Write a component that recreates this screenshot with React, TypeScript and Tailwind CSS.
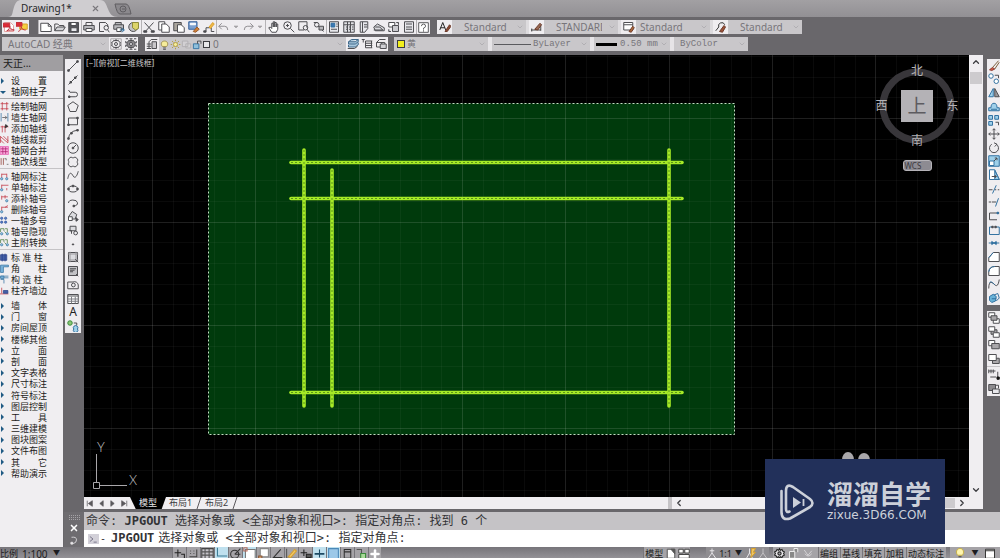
import { ReactNode } from "react";
import {
  ChevronDown,
  ChevronLeft,
  ChevronRight,
  ChevronUp,
  Plus,
  X,
} from "lucide-react";

type Part = [d: string, stroke: string, fill?: string];
type Icon = { name: string; parts: Part[]; size?: string };

const INK = "#4b4b4f";
const BLUE = "#2f6f9f";
const SKY = "#9fd0ea";
const RED = "#c0303c";
const GOLD = "#d9a02a";

// Every icon is drawn on a 16x16 grid
const Glyph = ({ parts, size = "size-3" }: { parts: Part[]; size?: string }) => (
  <svg viewBox="0 0 16 16" className={`${size} shrink-0`} aria-hidden="true">
    {parts.map(([d, stroke, fill], i) => (
      <path key={i} d={d} stroke={stroke} fill={fill ?? "none"} strokeWidth={1.3} />
    ))}
  </svg>
);

const PAGE = "M2 2h8l4 4v8H2z";

const pdfIcons: Icon[] = [
  {
    name: "PDF",
    parts: [
      [PAGE, "#e3a0a0", "#fff"],
      ["M0 3h9v5H0z", RED, "#dd2a36"],
      ["M5 13c3-1 4-4 4-6 0 3 3 5 6 5-4 0-7 0-10 1z", RED],
    ],
  },
  {
    name: "PDF 附件",
    parts: [
      ["M5 4h10v7H5z", GOLD, "#f5cf3e"],
      ["M0 2h8v5H0z", RED, "#dd2a36"],
      ["M3 14c3-1 4-4 4-6 1 3 3 4 6 4", RED],
    ],
  },
];

const standardIcons: Icon[][] = [
  [
    { name: "新建", parts: [["M1 3h10l4 4v7H1z", INK, "#fff"], ["M11 3v4h4", INK]] },
    { name: "打开", parts: [["M1 13V4h4l2 2h6v2", INK], ["M1 13l3-5h11l-3 5z", INK, "#d4d4d8"]] },
    { name: "保存", parts: [["M1 2h13v13H1z", INK, "#55565c"], ["M4 2h7v4H4z", INK, "#fff"], ["M4 9h8v5H4z", INK, "#e8e8ec"]] },
  ],
  [
    { name: "打印", parts: [["M4 6V2h8v4", INK], ["M1 6h14v6H1z", INK, "#b8b8bc"], ["M4 10h8v4H4z", INK, "#fff"]] },
    { name: "打印预览", parts: [["M2 14V2h8l3 3v3M2 14h6", INK], ["M8 9a3 3 0 1 0 6 0 3 3 0 1 0-6 0M13 12l2 3", INK]] },
    { name: "发布", parts: [["M3 5V2h8v3M1 5h13v6H1z", INK, "#b8b8bc"], ["M5 9h6v5H5z", INK, "#fff"], ["M9 12h6M12 9l3 3-3 3", BLUE]] },
    { name: "三维打印", parts: [["M1 8a6 6 0 1 0 12 0 6 6 0 1 0-12 0", INK, "#c4c4c8"], ["M6 2h8v8l-4 2-4-3z", "#8c8a38", "#dcd46a"]] },
  ],
  [
    { name: "剪切", parts: [["M2 2l10 11M14 2L4 13", INK], ["M1 13h4v2H1zM11 13h4v2h-4z", INK, INK]] },
    { name: "复制", parts: [["M1 1h8v11H1z", INK, "#fff"], ["M5 4h6l4 4v7H5z", INK, "#fff"]] },
    { name: "粘贴", parts: [["M1 2h10v11H1z", INK, "#a9a49c"], ["M6 5h5l4 4v6H6z", INK, "#fff"]] },
    { name: "特性匹配", parts: [["M1 1h11v10H1z", "#34609a", "#7ca0cf"], ["M3 3h7v2H3z", "#fff", "#fff"], ["M7 14l5-6 3 3-5 4z", "#9a5a2a", "#d08038"]] },
    { name: "块编辑器", parts: [["M1 14h3v-5h7v5h4", INK], ["M1 13h3v2H1z", INK], ["M8 8l5-6 2 2-5 6z", GOLD, "#f0b848"]] },
  ],
  [
    { name: "放弃", parts: [["M5 3L1 7l4 4M1 7h8q4 0 4 5", "#8f8d91"]] },
    { name: "放弃列表", size: "size-2", parts: [["M4 6h8l-4 4z", "#a5a3a6", "#a5a3a6"]] },
    { name: "重做", parts: [["M11 3l4 4-4 4M15 7H7q-4 0-4 5", "#8f8d91"]] },
    { name: "重做列表", size: "size-2", parts: [["M4 6h8l-4 4z", "#a5a3a6", "#a5a3a6"]] },
  ],
  [
    { name: "平移", parts: [["M5 15L1 9l2-1 2 2V3h2v5V1h2v7V2h2v6V4h2v7l-2 4z", INK, "#fff"]] },
    { name: "缩放", parts: [["M1 6a5 5 0 1 0 10 0 5 5 0 1 0-10 0M10 10l5 5M4 6h4M6 4v4", INK]] },
    { name: "窗口缩放", parts: [["M1 1h11v8M1 1v11h7", INK], ["M7 9a3 3 0 1 0 6 0 3 3 0 1 0-6 0M12 11l3 4", INK]] },
    { name: "上一个", parts: [["M2 5a3 3 0 1 0 6 0 3 3 0 1 0-6 0M7 7l7 7M1 2h5", INK], ["M8 7h6v5H8z", INK, "#b8b8bc"]] },
  ],
  [
    { name: "特性", parts: [["M2 1h12v14H2z", INK, "#e8e8ec"], ["M4 3h5v5H4z", BLUE, "#3b78b5"], ["M11 4h2M11 7h2M4 11h8", INK]] },
    { name: "设计中心", parts: [["M1 1h14v14H1z", INK, "#e0e0e4"], ["M1 5h14M4 8h2M8 8h2M12 8h2M4 11h2M8 11h2M12 11h2M6 1v14M10 1v14", INK]] },
    { name: "工具选项板", parts: [["M3 1h10v9l-4 5H3z", INK, "#e8e8ec"], ["M6 1v14M8 5h4M8 8h4", INK]] },
    { name: "图纸集", parts: [["M1 8l5-4 9 5v4H3z", INK, "#dadade"], ["M3 8h6l4 4M1 12h12", INK]] },
    { name: "标记集", parts: [["M1 2h8v6H1z", INK, "#fff"], ["M6 6h8v8H6zM11 2h3v3M1 11v3h3", INK, "#ccccd0"]] },
    { name: "计算器", parts: [["M2 1h12v14H2z", INK, "#e8e8ec"], ["M4 4h8M4 8h8M4 11h8", INK]] },
  ],
  [{ name: "帮助", size: "size-[11px]", parts: [["M1 1h14v14H1z", INK, "#fff"], ["M5 6q0-3 3-3t3 3q0 2-3 3v2M8 12v2", INK]] }],
];

// Widths of the seven sections of the standard toolbar
const standardWidths = [
  "w-[43px]",
  "w-[60px]",
  "w-[75px]",
  "w-[49px]",
  "w-[61px]",
  "w-[90px]",
  "w-[14px]",
];

const styleCombos: { icon: Icon; label: string; options: string[]; pad: string; end?: string }[] = [
  {
    icon: { name: "文字样式", parts: [["M1 12L5 2l4 10M2 9h6", "#222"], ["M8 14l6-9 2 2-5 7z", "#6b3a2a", "#8c4a34"]] },
    label: "文字样式",
    options: ["Standard"],
    pad: "pl-3",
  },
  {
    icon: { name: "标注样式", parts: [["M0 12h13M13 4v9M1 10v4", "#444"], ["M5 11l7-8 2 2-5 7z", "#6b3a2a", "#9a6a54"]] },
    label: "标注样式",
    options: ["STANDARD"],
    pad: "pl-3",
    end: "pr-4",
  },
  {
    icon: { name: "表格样式", parts: [["M1 2h12v10H1zM1 5h12", INK, "#fff"], ["M8 14l5-7 2 2-4 6z", "#6b3a2a", "#b06a3a"]] },
    label: "表格样式",
    options: ["Standard"],
    pad: "pl-1",
  },
  {
    icon: { name: "多重引线样式", parts: [["M1 13l4-5M5 8a4 4 0 0 1 8-3", "#333"], ["M6 14l6-8 2 2-4 7z", "#6b3a2a", "#9c5238"]] },
    label: "多重引线样式",
    options: ["Standard"],
    pad: "pl-3",
  },
];

const GEAR =
  "M8 2l1 2 2-1 1 2 2 1-1 2 1 2-2 1-1 2-2-1-1 2-1-2-2 1-1-2-2-1 1-2-1-2 2-1 1-2 2 1zM6 8a2 2 0 1 0 4 0 2 2 0 1 0-4 0";

const workspaceIcons: Icon[] = [
  { name: "工作空间设置", parts: [["M1 1h14v14H1z", "#aaa8ab"], [GEAR, INK]] },
  { name: "我的工作空间", parts: [["M1 1h3M6 1h4M12 1h3M1 15h3M6 15h4M12 15h3M1 4v3M1 9v3M15 4v3M15 9v3", INK], [GEAR, INK, "#8c8a8e"]] },
];

const LAYERS = "M2 5l4-3h9l-4 3zM2 5v3h9l4-3V2M2 9v3h9l4-3V6";

const layerIcons: Icon[] = [
  { name: "图层置为当前", parts: [[LAYERS, "#3c6688", "#a9c8de"], ["M1 14h9l4-3", INK]] },
  { name: "上一个图层", parts: [["M1 2h4M3 2v4", INK], ["M6 4h9M6 7h9M6 10h9M6 13h9M6 4v9M14 4v9", INK]] },
  { name: "图层状态", parts: [["M2 6l4-4h8M2 6h8M2 6v6h5", INK], ["M7 8h8v6H7z", INK, "#d0d0d4"], ["M9 8V6h4v2", INK]] },
];

const drawIcons: Icon[] = [
  { name: "直线", parts: [["M2 14L14 2", INK], ["M1 13h2v2H1zM13 1h2v2h-2z", INK, INK]] },
  { name: "构造线", parts: [["M2 14L14 2", INK], ["M4 10h2v2H4zM10 4h2v2h-2z", INK, INK]] },
  { name: "多段线", parts: [["M2 4l2 3h7a3 3 0 0 1 0 6H3", INK], ["M2 12h2v2H2z", INK, INK]] },
  { name: "多边形", parts: [["M8 1l7 5-3 8H4L1 6z", INK]] },
  { name: "矩形", parts: [["M2 4h12v9H2z", INK], ["M1 12h2v2H1zM13 3h2v2h-2z", INK, INK]] },
  { name: "圆弧", parts: [["M2 14Q3 4 14 3", INK], ["M1 13h2v2H1zM5 6h2v2H5zM13 2h2v2h-2z", INK, INK]] },
  { name: "圆", parts: [["M1 8a7 7 0 1 0 14 0 7 7 0 1 0-14 0M8 8l4-4", INK], ["M7 7h2v2H7z", INK, INK]] },
  { name: "修订云线", parts: [["M8 3a3 3 0 0 1 5 0 3 3 0 0 1 0 5 3 3 0 0 1 0 5 3 3 0 0 1-5 0 3 3 0 0 1-5 0 3 3 0 0 1 0-5 3 3 0 0 1 0-5 3 3 0 0 1 5 0z", INK]] },
  { name: "样条曲线", parts: [["M1 13c2-10 5-8 7-4s5 2 7-6", INK]] },
  { name: "椭圆", parts: [["M2 8a6 4 0 1 0 12 0 6 4 0 1 0-12 0", INK], ["M1 7h2v2H1zM13 7h2v2h-2zM7 3h2v2H7z", INK, INK]] },
  { name: "椭圆弧", parts: [["M2 8a6 4 0 1 1 7 4", INK], ["M8 11h2v2H8z", INK, INK]] },
  { name: "插入块", parts: [["M2 9l5-7 6 4-2 6H2z", INK, "#dcdce0"], ["M2 9h5v5H2z", INK, "#fff"], ["M12 10l3 3-3 2z", INK, INK]] },
  { name: "创建块", parts: [["M4 3h8v6H4z", INK, "#dcdce0"], ["M1 9h5v4M9 12a2 2 0 1 0 5 0 2 2 0 1 0-5 0", INK]] },
  { name: "点", parts: [["M7 8h2v1H7z", INK, INK]] },
  { name: "图案填充", parts: [["M2 2h12v12H2z", INK, "#dcdce0"], ["M1 4h14M1 12h14M4 1v14M12 1v14", "#9a989c"], ["M11 11l4 4", INK]] },
  { name: "渐变色", parts: [["M2 2h12v12H2z", INK, "#c2c2c6"], ["M4 5h8M4 7h6M4 9h4M12 12l3 3", INK]] },
  { name: "面域", parts: [["M1 13V4h7a5 5 0 0 1 7 4v5z", INK], ["M6 8a2 2 0 1 0 5 0 2 2 0 1 0-5 0", INK]] },
  { name: "表格", parts: [["M1 2h14v12H1z", INK, "#fff"], ["M1 4h14", INK], ["M1 8h14M1 11h14M6 5v9M11 5v9", "#7a7a80"]] },
];

const modifyIcons: Icon[] = [
  { name: "删除", parts: [["M2 13l4-3 3 2-4 2z", "#8c3a30", "#d05a48"], ["M6 10l8-9M9 12l6-9", "#7a5a38"]] },
  { name: "复制对象", parts: [["M1 4a3 3 0 1 0 6 0 3 3 0 1 0-6 0M8 11a3 3 0 1 0 6 0 3 3 0 1 0-6 0", BLUE, "#fff"], ["M9 3h5v4", INK]] },
  { name: "镜像", parts: [["M7 2v11H1z", BLUE, SKY], ["M9 2v11h6z", INK, "#9a989c"]] },
  { name: "偏移", parts: [["M1 13V9h3a4 6 0 0 1 8 0h3v4z", BLUE, SKY], ["M4 11h8", BLUE]] },
  { name: "阵列", parts: [["M1 2h5v5H1zM9 2h5v5H9zM1 10h5v5H1z", BLUE, SKY], ["M10 11h4v4", INK]] },
  { name: "移动", parts: [["M8 1v14M1 8h14M6 3l2-2 2 2M6 13l2 2 2-2M3 6L1 8l2 2M13 6l2 2-2 2", INK]] },
  { name: "旋转", parts: [["M5 3a6 6 0 1 0 6 0M8 1l4 2-3 3", INK]] },
  { name: "缩放", parts: [["M1 1h14v14H1z", BLUE, SKY], ["M2 8h6v6H2z", BLUE, "#fff"], ["M8 8l4-4M9 4h3v3", INK]] },
  { name: "拉伸", parts: [["M2 1h7l6 13H2z", BLUE, "#fff"], ["M9 2v12h6z", BLUE, SKY], ["M5 10h6M9 8l2 2-2 2", INK]] },
  { name: "修剪", parts: [["M1 9h5M9 9h2M13 9h2", INK], ["M6 14l5-11", BLUE]] },
  { name: "延伸", parts: [["M1 8h3M5 8h6", INK], ["M10 14l4-11", BLUE]] },
  { name: "打断于点", parts: [["M2 13V4h13M2 13h10", INK], ["M12 3h2v2h-2z", BLUE, BLUE]] },
  { name: "打断", parts: [["M2 14V4h4M10 4h5v10H2", BLUE], ["M5 3h2v2H5zM9 3h2v2H9z", INK, INK]] },
  { name: "合并", parts: [["M1 8h5M10 8h5", BLUE], ["M5 6l3 2-3 2zM11 6L8 8l3 2z", BLUE, BLUE]] },
  { name: "倒角", parts: [["M1 14V9l6-7h8v12z", INK, "#fff"], ["M1 9l6-7", BLUE]] },
  { name: "圆角", parts: [["M1 14V9q1-7 8-7h6v12z", INK, "#fff"], ["M1 9q1-7 8-7", BLUE]] },
  { name: "光顺曲线", parts: [["M1 14c0-12 5-8 8-5s5 0 6-7", INK], ["M2 6c2-2 4 0 7 3", BLUE]] },
  { name: "分解", parts: [["M2 6l5-3 4 3-1 6-5 2-3-3z", BLUE, "#69b3d8"], ["M8 4l5-2 2 6-4 4M5 9h6", BLUE]] },
];

const orderIcons: Icon[] = [
  { name: "前置", parts: [["M1 1h8v6H1z", INK, "#fff"], ["M7 9h8v6H7z", INK, "#fff"], ["M4 5h8v6H4z", INK, "#a9a7aa"]] },
  { name: "后置", parts: [["M4 5h8v6H4z", INK, "#a9a7aa"], ["M1 1h8v6H1zM7 9h8v6H7z", INK, "#fff"]] },
  { name: "置于对象之上", parts: [["M1 2h8v7H1z", INK, "#fff"], ["M5 6h10v7H5z", INK, "#a9a7aa"]] },
  { name: "置于对象之下", parts: [["M6 7h9v7H6z", INK, "#a9a7aa"], ["M1 2h10v8H1z", INK, "#fff"]] },
];

const annotationIcons: Icon[] = [
  { name: "注释前置", parts: [["M1 2v5M4 2v5M7 2v5M1 4h9M3 12h8M13 5v7", INK], ["M12 12h3v3h-3z", "#111", "#111"]] },
  { name: "图案填充后置", parts: [["M1 2h9v8H1z", INK, "#8c8a8e"], ["M6 8h9v6H6z", INK, "#e8e8ec"], ["M10 3h4v4", INK]] },
];

const AXIS: Part[] = [["M1 3h14M1 12h14M4 0v15M12 0v15", RED]];
const MARKS: Part[] = [
  ["M3 3v7M12 3v7M3 4h9", RED],
  ["M1 12a2 2 0 1 0 4 0 2 2 0 1 0-4 0M10 12a2 2 0 1 0 4 0 2 2 0 1 0-4 0", BLUE, SKY],
];
const SWAP: Part[] = [
  ["M1 9V3h6v4M8 8l6 6M9 3h4v6", "#4a7a3a"],
  ["M1 12a2 2 0 1 0 4 0 2 2 0 1 0-4 0M11 12a2 2 0 1 0 4 0 2 2 0 1 0-4 0", BLUE, SKY],
];

const axisMenu: { text: string; parts: Part[] }[][] = [
  [
    { text: "绘制轴网", parts: AXIS },
    { text: "墙生轴网", parts: [["M2 0v15M14 0v15", BLUE], ["M4 8h8M9 5l3 3-3 3", INK]] },
    { text: "添加轴线", parts: [["M1 5h14M4 3v12M9 3v12", RED], ["M10 1l4 3-5 3z", "#333", "#333"]] },
    { text: "轴线裁剪", parts: [["M1 3l13 11M6 2l9 9M1 9l6 6M1 14V2M14 2v12", RED]] },
    { text: "轴网合并", parts: [["M0 1h15v14H0z", "#e65ab0", "#f7a6d8"], ["M1 5h13M1 10h13M5 2v12M10 2v12", "#b02070"]] },
    { text: "轴改线型", parts: [["M2 2v12M6 2v12", "#8c3a30"], ["M8 3h3v3M12 13h3", "#555"]] },
  ],
  [
    { text: "轴网标注", parts: MARKS },
    { text: "单轴标注", parts: [["M3 3v7M3 4h12", RED], ["M1 12a2 2 0 1 0 4 0 2 2 0 1 0-4 0", BLUE, SKY], ["M12 9v4", RED]] },
    { text: "添补轴号", parts: [["M3 3v7M3 5h11M9 2v6", RED, RED], ["M10 12a2 2 0 1 0 4 0 2 2 0 1 0-4 0", BLUE, SKY]] },
    { text: "删除轴号", parts: [["M3 3v7M3 4h11M9 4l5-3", RED], ["M1 12a2 2 0 1 0 4 0 2 2 0 1 0-4 0", BLUE, SKY]] },
    { text: "一轴多号", parts: [["M1 4a2 2 0 1 0 4 0 2 2 0 1 0-4 0M8 4a2 2 0 1 0 4 0 2 2 0 1 0-4 0M1 11a2 2 0 1 0 4 0 2 2 0 1 0-4 0M8 11a2 2 0 1 0 4 0 2 2 0 1 0-4 0", "#2a4f9a", "#5a80c8"]] },
    { text: "轴号隐现", parts: SWAP },
    { text: "主附转换", parts: SWAP },
  ],
  [
    { text: "标 准 柱", parts: [["M1 3h11v10H1z", "#2a4088", "#4460a8"], ["M4 1v14M9 1v14", "#2a4088"]] },
    { text: "角　　柱", parts: [["M1 2h14v3H6v10H1z", BLUE, "#7cb4dc"]] },
    { text: "构 造 柱", parts: [["M1 2h14M1 5h14M1 8h6v7", BLUE], ["M1 2h6v4H1z", BLUE, "#7cb4dc"]] },
    { text: "柱齐墙边", parts: [["M0 14h15M3 3v10", RED], ["M6 8h8v5H6z", "#2a4088", "#4460a8"]] },
  ],
];

const topMenu = [
  "墙　　体",
  "门　　窗",
  "房间屋顶",
  "楼梯其他",
  "立　　面",
  "剖　　面",
  "文字表格",
  "尺寸标注",
  "符号标注",
  "图层控制",
  "工　　具",
  "三维建模",
  "图块图案",
  "文件布图",
  "其　　它",
  "帮助演示",
];

const IconButton = ({ icon }: { icon: Icon }) => (
  <button type="button" aria-label={icon.name} className="flex shrink-0 items-center justify-center">
    <Glyph parts={icon.parts} size={icon.size} />
  </button>
);

type ComboProps = {
  label: string;
  options: string[];
  width: string;
  pad?: string;
  end?: string;
  font?: string;
  children?: ReactNode;
};

const Combo = ({
  label,
  options,
  width,
  pad = "pl-1",
  end = "pr-3",
  font = "text-[10px]",
  children,
}: ComboProps) => (
  <label className={`relative flex h-full shrink-0 items-center bg-[#c9c7ca] ${width}`}>
    {children}
    <select
      aria-label={label}
      className={`h-full min-w-0 flex-1 appearance-none overflow-hidden bg-transparent leading-[14px] text-[#77757a] outline-none ${pad} ${end} ${font}`}
    >
      {options.map((option) => (
        <option key={option}>{option}</option>
      ))}
    </select>
    <ChevronDown className="pointer-events-none absolute right-[2px] size-2 text-[#a5a3a7]" />
  </label>
);

const TitleBar = () => (
  <header className="flex h-[17px] shrink-0 bg-linear-to-b from-[#a2a0a3] to-[#929094]">
    <div className="relative flex w-[118px] items-center pl-[21px]">
      <svg viewBox="0 0 118 17" className="absolute inset-0 size-full" aria-hidden="true">
        <path d="M8 17c5 0 4-4 6-10S18 0 22 0h78c5 0 6 4 8 9s4 8 10 8z" fill="#cfcdd0" />
      </svg>
      <span className="relative text-[10px] leading-[17px] text-[#28282b]">Drawing1*</span>
      <button type="button" aria-label="关闭" className="relative ml-auto mr-[18px]">
        <X className="size-[9px] text-[#7a787c]" strokeWidth={3} />
      </button>
    </div>
    <button type="button" aria-label="新图形" className="flex items-center">
      <svg viewBox="0 0 18 12" className="-ml-1 h-3 w-[18px]" aria-hidden="true">
        <path d="M1 1h11q3 0 5 10H6Q3 11 1 1z" fill="#8b898d" stroke="#5f5d61" />
        <path d="M6 6a3 3 0 1 0 6 0 3 3 0 1 0-6 0M8 6h3" fill="none" stroke="#5f5d61" />
      </svg>
    </button>
  </header>
);

const Toolbars = () => (
  <div className="flex shrink-0 flex-col gap-[3px] pb-1 pt-[3px]">
    <div className="flex h-[14px] pl-[2px]">
      <div className="flex w-[27px] items-center justify-around bg-[#efedf0]">
        {pdfIcons.map((icon) => (
          <IconButton key={icon.name} icon={icon} />
        ))}
      </div>
      <div className="ml-[9px] flex bg-[#efedf0]">
        {standardIcons.map((group, i) => (
          <div
            key={i}
            className={`flex items-center justify-around border-l border-[#b5b3b6] ${standardWidths[i]}`}
          >
            {group.map((icon) => (
              <IconButton key={icon.name} icon={icon} />
            ))}
          </div>
        ))}
      </div>
      <div className="ml-[7px] flex gap-[3px] bg-[#dddbde]">
        {styleCombos.map((combo) => (
          <div key={combo.label} className="flex">
            <span className="flex w-[15px] items-center justify-center bg-[#efedf0]">
              <Glyph parts={combo.icon.parts} />
            </span>
            <Combo
              label={combo.label}
              options={combo.options}
              width="w-[74px]"
              pad={combo.pad}
              end={combo.end}
            />
          </div>
        ))}
      </div>
    </div>

    <div className="flex h-[14px] pl-[2px]">
      <div className="flex bg-[#efedf0]">
        <Combo label="工作空间" options={["AutoCAD 经典"]} width="w-[107px]" pad="pl-[6px]" />
        <div className="flex w-[29px] items-center justify-around">
          {workspaceIcons.map((icon) => (
            <IconButton key={icon.name} icon={icon} />
          ))}
        </div>
      </div>
      <div className="ml-[7px] flex bg-[#efedf0]">
        <span className="flex w-[14px] items-center justify-center">
          <Glyph parts={[["M4 5l3-3h8M4 5v9M1 8h6M1 11h6M1 14h6", INK], ["M8 5h6v9H8z", INK, "#c9c7ca"]]} />
        </span>
        <Combo label="图层" options={["0"]} width="w-[187px]" pad="pl-[3px]">
          <span className="flex items-center">
            <Glyph
              size="size-[11px]"
              parts={[["M5 11C2 8 3 3 8 3s6 5 3 8z", "#9a8a4a", "#f5ec9a"], ["M6 13h4M6 15h4", INK]]}
            />
            <Glyph
              size="size-[11px]"
              parts={[
                ["M5 8a3 3 0 1 0 6 0 3 3 0 1 0-6 0", "#b09a3a", "#f5ec9a"],
                ["M8 1v2M8 13v2M1 8h2M13 8h2M3 3l2 2M11 11l2 2M13 3l-2 2M5 11l-2 2", "#b09a3a"],
              ]}
            />
            <Glyph size="size-[11px]" parts={[["M2 3h8v8H2zM7 7h7v6H7z", "#b0aeb1", "#d2d0d3"]]} />
            <Glyph size="size-[11px]" parts={[["M2 7h8v7H2z", BLUE, "#8fc0dc"], ["M8 7V3h5v4", INK]]} />
            <span className="size-[7px] border border-[#3c3c40] bg-[#e8e8ea]" />
          </span>
        </Combo>
        <div className="flex w-[42px] items-center justify-around">
          {layerIcons.map((icon) => (
            <IconButton key={icon.name} icon={icon} />
          ))}
        </div>
      </div>
      <div className="ml-[6px] flex gap-1 bg-[#e6e4e7]">
        <Combo label="颜色" options={["黄"]} width="w-[94px]" pad="pl-[2px]" font="text-[9px]">
          <span className="ml-[3px] size-2 border border-[#3c3c40] bg-[#f2ee1c]" />
        </Combo>
        <Combo
          label="线型"
          options={["ByLayer"]}
          width="w-[98px]"
          pad="pl-[2px]"
          font="font-['Liberation_Mono',monospace] text-[9px]"
        >
          <span className="ml-[2px] h-px w-[37px] bg-[#5a5a5e]" />
        </Combo>
        <Combo
          label="线宽"
          options={["0.50 mm"]}
          width="w-[76px]"
          pad="pl-[3px]"
          font="font-['Liberation_Mono',monospace] text-[9px]"
        >
          <span className="ml-[2px] h-[3px] w-[21px] bg-black" />
        </Combo>
        <Combo
          label="打印样式"
          options={["ByColor"]}
          width="w-[74px]"
          pad="pl-[6px]"
          font="font-['Liberation_Mono',monospace] text-[9px]"
        />
      </div>
    </div>
  </div>
);

const MenuRow = ({ text, children }: { text: string; children: ReactNode }) => (
  <button type="button" className="flex h-[11px] w-full items-center whitespace-pre text-left">
    <span className="flex w-[11px] items-center">{children}</span>
    {text}
  </button>
);

const Arrow = ({ open = false }: { open?: boolean }) => (
  <svg viewBox="0 0 8 8" className="size-2" aria-hidden="true">
    <path d={open ? "M0 3h6L3 6z" : "M1 1v6l3-3z"} fill="#1f5a84" />
  </svg>
);

const SideMenu = () => (
  <aside className="flex w-[63px] shrink-0 flex-col overflow-hidden bg-[#f0eef1] text-[9px] leading-[11px] text-[#1c1c20]">
    <h2 className="h-4 shrink-0 bg-[#a09ea1] pl-[3px] text-[10px] leading-4">天正...</h2>
    <div className="border-b border-[#a9a7aa] pb-px pt-[4px]">
      <MenuRow text="设　　置">
        <Arrow />
      </MenuRow>
      <MenuRow text="轴网柱子">
        <Arrow open />
      </MenuRow>
    </div>
    {axisMenu.map((group, i) => (
      <div key={i} className={i < 2 ? "border-b border-[#c5c3c6] pb-px pt-[2px]" : "pb-1 pt-[2px]"}>
        {group.map((item) => (
          <MenuRow key={item.text} text={item.text}>
            <Glyph parts={item.parts} size="size-[9px]" />
          </MenuRow>
        ))}
      </div>
    ))}
    <div className="flex h-[179px] flex-col justify-between">
      {topMenu.map((text) => (
        <MenuRow key={text} text={text}>
          <Arrow />
        </MenuRow>
      ))}
    </div>
  </aside>
);

const DrawToolbar = () => (
  <div className="w-5 shrink-0 pl-px pt-1">
    <div className="flex h-[274px] w-4 flex-col items-center justify-around bg-[#efedf0]">
      {drawIcons.map((icon) => (
        <IconButton key={icon.name} icon={icon} />
      ))}
      <button type="button" aria-label="多行文字" className="text-[12px] leading-3 text-[#222]">
        A
      </button>
      <IconButton
        icon={{
          name: "添加选定对象",
          parts: [
            ["M1 4a3 3 0 1 0 6 0 3 3 0 1 0-6 0", "#3a8a3a", "#8cc878"],
            ["M9 12a3 3 0 1 0 5 0 3 3 0 1 0-5 0", BLUE, SKY],
            ["M9 4h4v3", INK],
          ],
        }}
      />
    </div>
  </div>
);

const ModifyToolbar = () => (
  <div className="flex w-[17px] shrink-0 flex-col gap-[6px] overflow-hidden pl-1 pt-1">
    <div className="flex h-[246px] flex-col items-center justify-around bg-[#efedf0]">
      {modifyIcons.map((icon) => (
        <IconButton key={icon.name} icon={icon} />
      ))}
    </div>
    <div className="flex h-[85px] flex-col items-center bg-[#efedf0]">
      <div className="flex h-[56px] w-full flex-col items-center justify-around border-b border-[#c5c3c6]">
        {orderIcons.map((icon) => (
          <IconButton key={icon.name} icon={icon} />
        ))}
      </div>
      <div className="flex flex-1 flex-col items-center justify-around">
        {annotationIcons.map((icon) => (
          <IconButton key={icon.name} icon={icon} />
        ))}
      </div>
    </div>
  </div>
);

// Grid lines every 20.67px, every fifth one is a major line
const gridLines = (first: number, count: number) =>
  Array.from({ length: count }, (_, i) => ({
    at: Math.round(first + i * 20.67) + 0.5,
    major: i % 5 === 0,
  }));

const axes = [
  "M207 107.5H598",
  "M207 143.5H598",
  "M207 337.5H598",
  "M220 95V351",
  "M248 115V351",
  "M585 95V351",
];

const Drawing = () => (
  <svg className="absolute inset-0 size-full" aria-hidden="true">
    <rect x={124.5} y={48.5} width={526} height={331} fill="#003a0c" />
    {gridLines(-35.4, 60).map(({ at, major }) => (
      <path key={`v${at}`} d={`M${at} 0V2000`} stroke="#fff" strokeOpacity={major ? 0.12 : 0.04} />
    ))}
    {gridLines(-40.2, 60).map(({ at, major }) => (
      <path key={`h${at}`} d={`M0 ${at}H3000`} stroke="#fff" strokeOpacity={major ? 0.12 : 0.04} />
    ))}
    <rect
      x={124.5}
      y={48.5}
      width={526}
      height={331}
      fill="none"
      stroke="#c4dfc4"
      strokeDasharray="2 2"
    />
    {axes.map((d) => (
      <g key={d} fill="none">
        <path d={d} stroke="#a6ea26" strokeWidth={3.6} strokeLinecap="round" />
        <path d={d} stroke="#5a961a" strokeDasharray="2 2" />
      </g>
    ))}
  </svg>
);

const ViewCube = () => (
  <div className="absolute right-[10px] top-2 flex w-[84px] flex-col items-center text-[12px] leading-3 text-[#b5b3b6]">
    <div className="relative grid h-[86px] w-full grid-cols-[13px_1fr_13px] grid-rows-[16px_1fr_16px] place-items-center">
      <svg viewBox="0 0 84 86" className="absolute inset-0 size-full" aria-hidden="true">
        <circle cx={42} cy={43} r={34} fill="none" stroke="#38363a" strokeWidth={7} />
      </svg>
      <button type="button" className="relative col-start-2">北</button>
      <button type="button" className="relative col-start-1 row-start-2">西</button>
      <button
        type="button"
        className="relative col-start-2 row-start-2 size-8 bg-[#b4b2b6] text-[19px] text-[#5d5b60]"
      >
        上
      </button>
      <button type="button" className="relative col-start-3 row-start-2">东</button>
      <button type="button" className="relative col-start-2 row-start-3">南</button>
    </div>
    <button
      type="button"
      className="mt-[11px] h-[11px] w-[29px] rounded-[3px] border border-[#b5b3b8] bg-[#8d8b92] pl-px text-left text-[8px] leading-[9px] text-[#3c3a40]"
    >
      WCS
    </button>
  </div>
);

const UcsIcon = () => (
  <svg viewBox="0 0 60 60" className="absolute bottom-0 left-1 size-[60px]" aria-hidden="true">
    <path d="M5.500 45.500h6v6h-6zM8.500 45V17M12 48.500h27" fill="none" stroke="#a9a7aa" />
    <g fill="#c5c3c6" fontSize={13} fontFamily="Lato, sans-serif" fontWeight={300}>
      <text x={9} y={15}>Y</text>
      <text x={41} y={48}>X</text>
    </g>
  </svg>
);

const layoutSteps: Icon[] = [
  { name: "第一个布局", size: "size-[9px]", parts: [["M4 3v10M13 3v10L6 8z", "#5a585c", "#5a585c"]] },
  { name: "上一个布局", size: "size-[9px]", parts: [["M11 3v10L5 8z", "#5a585c", "#5a585c"]] },
  { name: "下一个布局", size: "size-[9px]", parts: [["M5 3v10l6-5z", "#5a585c", "#5a585c"]] },
  { name: "最后一个布局", size: "size-[9px]", parts: [["M12 3v10M3 3v10l7-5z", "#5a585c", "#5a585c"]] },
];

const Workspace = () => (
  <main className="flex min-w-0 flex-1 flex-col">
    <div className="flex min-h-0 flex-1">
      <div className="relative min-w-0 flex-1 overflow-hidden bg-black">
        <Drawing />
        <p className="relative pl-[2px] pt-[2px] text-[8px] leading-3 text-[#c8c6c9]">[−][俯视][二维线框]</p>
        <ViewCube />
        <UcsIcon />
        <svg viewBox="0 0 30 12" className="absolute bottom-[37px] right-[97px] h-3 w-[30px]" aria-hidden="true">
          <path d="M0 12a6 8 0 0 1 12 0zM16 12a6 7 0 0 1 12 0z" fill="#a9a7aa" />
        </svg>
      </div>
      <div className="flex w-[14px] shrink-0 flex-col items-center bg-[#f0eef1] text-[#3c3c40]">
        <ChevronUp className="mt-[2px] size-[10px]" strokeWidth={3} />
        <div className="mt-[5px] h-3 w-3 bg-[#cdcbce]" />
        <ChevronDown className="mb-[2px] mt-auto size-[10px]" strokeWidth={3} />
      </div>
    </div>
    <div className="flex h-3 shrink-0 items-center bg-[#f0eef1] text-[9px] leading-3 text-[#3c3c40]">
      <div className="flex w-[46px] items-center justify-around">
        {layoutSteps.map((icon) => (
          <IconButton key={icon.name} icon={icon} />
        ))}
      </div>
      <button
        type="button"
        className="h-3 w-9 bg-black text-[#e8e6e9] [clip-path:polygon(0_0,100%_0,88%_100%,16%_100%)]"
      >
        模型
      </button>
      {["布局1", "布局2"].map((tab) => (
        <button key={tab} type="button" className="flex w-9 items-center justify-between pl-[3px]">
          {tab}
          <svg viewBox="0 0 6 12" className="h-3 w-[6px]" aria-hidden="true">
            <path d="M5 0L1 12" stroke="#5a585c" />
          </svg>
        </button>
      ))}
      <div className="ml-auto flex h-full w-[315px] items-center">
        <div className="h-full w-1 bg-[#c5c3c6]" />
        <ChevronLeft className="ml-[2px] size-[10px]" strokeWidth={3} />
        <div className="ml-auto h-[10px] w-[180px] bg-[#cdcbce]" />
        <ChevronRight className="ml-[2px] mr-4 size-[10px]" strokeWidth={3} />
      </div>
    </div>
  </main>
);

const CommandLine = () => (
  <section className="mt-[3px] flex h-[35px] shrink-0 whitespace-pre font-['DejaVu_Sans_Mono','Noto_Sans_CJK_SC',monospace] text-[12px] text-[#333336]">
    <div className="flex w-5 shrink-0 flex-col items-center gap-[3px] overflow-hidden bg-[#6e6c70] pt-[3px] text-white">
      <div className="grid grid-cols-6 gap-px">
        {Array.from({ length: 18 }, (_, i) => (
          <span key={i} className="size-px bg-[#a5a3a7]" />
        ))}
      </div>
      <button type="button" aria-label="关闭命令行">
        <X className="size-[10px]" strokeWidth={4} />
      </button>
      <Glyph
        parts={[["M4 2q8-1 8 4t-5 6H3", "#e8e6e9"], ["M3 10h3v3H3z", "#e8e6e9", "#e8e6e9"]]}
        size="size-[10px]"
      />
    </div>
    <div className="min-w-0 flex-1">
      <p className="h-[18px] overflow-hidden bg-[#c5c3c6] pl-[2px] leading-[18px]">
        命令: <b className="font-bold">JPGOUT</b> 选择对象或 &lt;全部对象和视口&gt;: 指定对角点: 找到 6 个
      </p>
      <div className="flex h-[17px] items-center overflow-hidden bg-white pl-1 leading-[17px]">
        <span className="flex h-[10px] w-[11px] items-center bg-[#d2d0d8]">
          <Glyph parts={[["M3 4l5 4-5 4M9 13h5", "#66647a"]]} size="size-[10px]" />
        </span>
        <span className="mr-[5px] w-[7px] text-right text-[10px]">-</span>
        <label htmlFor="command">
          <b className="mr-1 font-bold">JPGOUT</b>选择对象或 &lt;全部对象和视口&gt;: 指定对角点:
        </label>
        <input id="command" type="text" className="min-w-0 flex-1 bg-transparent outline-none" />
      </div>
    </div>
  </section>
);

const statusIcons: (Icon & { on?: boolean })[] = [
  { name: "推断约束", parts: [["M2 7h8M6 3v9M10 9h4v5", "#222"]] },
  { name: "捕捉", parts: [["M3 12h9V3M4 5h1M8 5h1M4 8h1M8 8h1", "#444"]] },
  { name: "栅格", parts: [["M1 2h14v14H1z", "#444", "#c5c3c9"], ["M1 6h14M1 10h14M5 2v14M10 2v14", "#555"]] },
  { name: "正交", on: true, parts: [["M3 1v10h12", "#3a7a94"]] },
  { name: "极轴", parts: [["M2 9a5 5 0 1 0 10 0 5 5 0 1 0-10 0M7 9l7-7M7 9h7", "#333"]] },
  { name: "对象捕捉", on: true, parts: [["M3 3h12v13H3z", "#777", "#fff"], ["M1 1h4v4H1z", "#b86a5a"]] },
  { name: "三维对象捕捉", parts: [["M4 2h10v10H4z", "#888", "#fff"], ["M2 11h4v4H2z", "#8a5a3a", "#d09a6a"]] },
  { name: "对象追踪", parts: [["M12 3L3 13h11", "#333"]] },
  { name: "动态 UCS", parts: [["M2 2v12h13", "#555"], ["M4 12l8-9 2 2-7 8z", GOLD, "#f0c868"]] },
  { name: "动态输入", parts: [["M2 7h8M6 3v8M9 9h6v4H9z", "#222", "#555"]] },
  { name: "线宽", on: true, parts: [["M2 8h12M8 3v10M2 9h12", "#1c4a64"]] },
  { name: "透明度", on: true, parts: [["M2 2h12v14H2z", "#4a88b8", "#9cc8e8"]] },
  { name: "快捷特性", parts: [["M4 3h8v11H4zM4 6h8", "#333"]] },
  { name: "选择循环", parts: [["M2 3h6v8", "#555"], ["M7 8h6v8H7z", "#3a8a3a", "#a8d898"]] },
];

const StatusText = ({ children }: { children: string }) => (
  <button type="button" className="border-l border-[#77757a] bg-[#a5a3a7] pl-px pr-[2px]">
    {children}
  </button>
);

const StatusBar = () => (
  <footer className="flex h-[11px] shrink-0 items-start overflow-hidden whitespace-nowrap bg-linear-to-b from-[#77757a] to-[#939196] text-[9px] leading-[14px] text-[#1c1c20]">
    <label className="flex">
      比例
      <select aria-label="比例" className="ml-1 w-[27px] appearance-none text-[10px] leading-[14px]">
        <option>1:100</option>
      </select>
      <span className="ml-1 text-[7px] leading-3">▼</span>
    </label>
    <div className="ml-[112px] flex">
      {statusIcons.map((icon) => (
        <button
          key={icon.name}
          type="button"
          aria-label={icon.name}
          className={`border-l border-[#77757a] ${icon.on ? "bg-[#bfe0ee]" : "bg-[#a5a3a7]"}`}
        >
          <Glyph parts={icon.parts} size="size-[13px]" />
        </button>
      ))}
      <button type="button" aria-label="注释监视器" className="border-l border-[#77757a] bg-[#a5a3a7]">
        <Plus className="size-3 text-white" strokeWidth={5} />
      </button>
    </div>
    <div className="ml-auto flex">
      <StatusText>模型</StatusText>
      <span className="flex gap-px bg-[#a5a3a7]">
        <Glyph parts={[["M3 3h10v12H3z", "#555", "#fff"], ["M8 3l5 6V3z", "#555", "#555"]]} />
        <Glyph parts={[["M1 3h6v5H1zM9 3h6v5H9zM1 10h14v5H1z", "#444", "#fff"]]} />
      </span>
      <span className="ml-4 flex bg-[#8f8d91]">
        <Glyph parts={[["M8 2v6M8 8l-5 7M8 8l5 7M5 5h6", "#e8e6e9"]]} />
        <button type="button" className="pl-px">1:1</button>
        <span className="px-[3px] text-[7px] leading-3">▼</span>
        <Glyph parts={[["M6 2v6l-4 7M6 8l4 7", "#e8e6e9"], ["M9 2h5l-3 5h3l-6 7z", GOLD, "#f0c868"]]} />
        <Glyph parts={[["M8 2v6l-5 7M8 8l5 7", "#c5c3c6"]]} />
      </span>
      <span className="ml-1 flex gap-[2px] bg-[#a5a3a7] pr-1">
        <Glyph parts={[[GEAR, "#222", "#e8e6e9"]]} size="size-[13px]" />
        <Glyph parts={[["M2 6h7v9H2zM8 6V2h5v5", "#eee", "#888"]]} />
        <Glyph parts={[["M3 4l5 7 5-6M4 9q4 6 9 0", "#d5d3d6"]]} />
      </span>
      <StatusText>编组</StatusText>
      <StatusText>基线</StatusText>
      <StatusText>填充</StatusText>
      <StatusText>加粗</StatusText>
      <StatusText>动态标注</StatusText>
      <span className="ml-1 flex w-[50px] justify-between bg-[#a5a3a7] px-1">
        <Glyph parts={[["M5 11C2 8 3 2 8 2s6 6 3 9z", "#c8b040", "#fff6b0"], ["M6 13h4", "#444"]]} />
        <span className="text-[7px] leading-3">▼</span>
        <Glyph parts={[["M2 3h12v12H2zM2 5h12", "#333", "#fff"]]} />
      </span>
    </div>
  </footer>
);

const Watermark = () => (
  <div className="absolute bottom-[14px] right-[55px] flex h-[85px] w-[180px] items-center gap-3 bg-[#22305a] pl-[14px] text-[#ccd0d9]">
    <svg viewBox="0 0 36 38" className="h-[38px] w-9 shrink-0" aria-hidden="true">
      <g fill="none" stroke="currentColor" strokeWidth={2.6} strokeLinecap="round" strokeLinejoin="round">
        <path d="M2.500 8V29q0 9 8.500 6.500L31 24q5-4 0-8L14 4Q7 0 7 8V26q0 4 3.500 2.500" />
      </g>
      <path d="M14 14v11l8-5.500z" fill="currentColor" />
      <path d="M24.500 16v7" stroke="currentColor" strokeWidth={1.8} />
    </svg>
    <div className="flex flex-col gap-1 whitespace-nowrap">
      <p className="text-[26px] font-bold leading-[22px]">溜溜自学</p>
      <p className="font-['DejaVu_Sans',sans-serif] text-[12px] leading-3">zixue.3D66.COM</p>
    </div>
  </div>
);

export default function App() {
  return (
    <div className="relative flex h-screen flex-col overflow-hidden bg-[#69676b] font-['Noto_Sans','Noto_Sans_CJK_SC',sans-serif]">
      <TitleBar />
      <Toolbars />
      <div className="flex min-h-0 flex-1">
        <SideMenu />
        <div className="flex min-w-0 flex-1 flex-col pl-px">
          <div className="flex min-h-0 flex-1">
            <DrawToolbar />
            <Workspace />
            <ModifyToolbar />
          </div>
          <CommandLine />
        </div>
      </div>
      <StatusBar />
      <Watermark />
    </div>
  );
}
